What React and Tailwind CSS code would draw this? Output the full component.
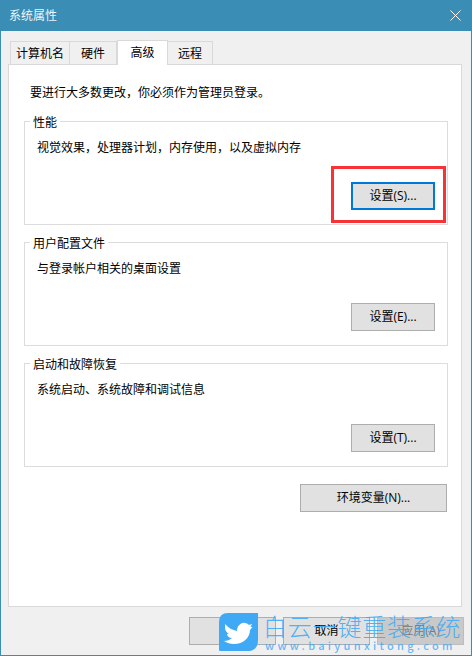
function Btn({ children, active, className = '' }) {
  return (
    <div
      className={`h-[28px] flex items-center justify-center text-[12px] text-black bg-[#e1e1e1] [font-family:'Open_Sans','Noto_Sans_CJK_SC',sans-serif] ${
        active ? 'border-2 border-[#0078d7]' : 'border border-[#adadad]'
      } ${className}`}
    >
      {children}
    </div>
  );
}

function Group({ title, desc, children }) {
  return (
    <div className="relative h-[104px] border border-[#dcdcdc]">
      <div className="absolute left-[5px] -top-[9px] h-[18px] px-[3px] bg-white text-[12px] leading-[18px] text-black">
        {title}
      </div>
      <div className="pt-[17px] pl-[12px] text-[12px] leading-[16px] text-black">{desc}</div>
      <div className="flex justify-end pr-[12px] mt-[27px]">{children}</div>
    </div>
  );
}

export default function App() {
  return (
    <div className="w-[472px] h-[656px] flex flex-col bg-[#f0f0f0] border-x border-b border-[#3a8db5] overflow-hidden relative [font-family:'Noto_Sans_CJK_SC',sans-serif]">
      {/* Title bar */}
      <div className="h-[31px] -mx-px bg-[#3a8db5] flex items-center justify-between pl-[9px] pr-[11px] pb-[1px] shrink-0">
        <span className="text-[12px] text-[#eef6fa]">系统属性</span>
        <svg width="11" height="11" viewBox="0 0 11 11" fill="none" stroke="white" strokeWidth="1">
          <path d="M0.5 0.5 L10.5 10.5 M10.5 0.5 L0.5 10.5" />
        </svg>
      </div>

      {/* Tabs */}
      <div className="h-[34px] pl-[9px] flex items-end shrink-0 relative z-10 text-[12px] text-black">
        <div className="w-[60px] h-[23px] mb-px border border-b-0 border-[#d9d9d9] flex items-center justify-center">计算机名</div>
        <div className="w-[47px] h-[23px] mb-px border border-b-0 border-l-0 border-[#d9d9d9] flex items-center justify-center">硬件</div>
        <div className="w-[51px] h-[25px] bg-white border border-b-0 border-[#d9d9d9] flex items-center justify-center pb-[2px]">高级</div>
        <div className="w-[45px] h-[23px] mb-px border border-b-0 border-l-0 border-[#d9d9d9] flex items-center justify-center">远程</div>
      </div>

      {/* Panel */}
      <div className="ml-[7px] w-[454px] h-[543px] -mt-px bg-white border border-[#d9d9d9] pl-[15px] pr-[13px] shrink-0">
        <div className="pt-[19px] pl-[6px] text-[12px] leading-[16px] text-black h-[56px]">要进行大多数更改，你必须作为管理员登录。</div>
        <div className="flex flex-col gap-[17px]">
          <Group title="性能" desc="视觉效果，处理器计划，内存使用，以及虚拟内存">
            <Btn active className="w-[84px]">设置(S)...</Btn>
          </Group>
          <Group title="用户配置文件" desc="与登录帐户相关的桌面设置">
            <Btn className="w-[84px]">设置(E)...</Btn>
          </Group>
          <Group title="启动和故障恢复" desc="系统启动、系统故障和调试信息">
            <Btn className="w-[84px]">设置(T)...</Btn>
          </Group>
        </div>
        <div className="flex justify-end mt-[17px] pr-px">
          <Btn className="w-[147px]">环境变量(N)...</Btn>
        </div>
      </div>

      {/* Bottom buttons */}
      <div className="flex justify-start gap-[7px] pl-[188px] pt-[10px]">
        <Btn className="w-[87px]">确定</Btn>
        <Btn className="w-[87px]">取消</Btn>
        <Btn className="w-[87px] text-[#7a7a7a]! bg-[#c9c9c9]! border-[#bdbdbd]!">应用(A)</Btn>
      </div>

      {/* Red highlight */}
      <div className="absolute left-[330px] top-[166px] w-[115px] h-[57px] border-[3px] border-[#f73338]" />

      {/* Watermark */}
      <svg className="absolute left-[218px] top-[613px]" width="39" height="38" viewBox="0 0 39 38">
        <path d="M9 0 H39 V27 Q39 38 28 38 H1 Q0 38 0 37 V9 Q0 0 9 0 Z" fill="#3fa9f5" />
        <path
          d="M6 11 C10 15 13 17 18 18 C18 13 22 9 26 10 C28 10 29 11 30 12 L33 11 L31.5 14 L33.5 14 L31 17 C31 25 24 31 15 31 C11 31 8 30 5 28 C8 28 11 27 13 25 C10 25 8 23 8 21 L10 21 C8 20 6 17 6 15 Z"
          fill="white"
        />
      </svg>
      <div className="absolute left-[262px] top-[608px] text-[24px] leading-[36px] font-light text-[#3fa9f5]/90 whitespace-nowrap tracking-[0.8px]">
        白云一键重装系统
      </div>
      <div className="absolute left-[264px] top-[638px] text-[11px] leading-[14px] font-medium text-[#3fa9f5]/80 whitespace-nowrap tracking-[3.3px]">
        www.baiyunxitong.com
      </div>
    </div>
  );
}
